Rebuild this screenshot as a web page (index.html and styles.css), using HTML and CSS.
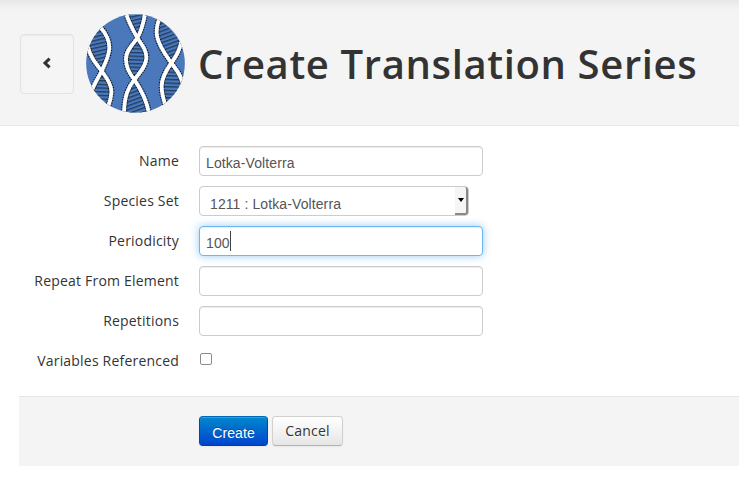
FILE: index.html
```html
<!DOCTYPE html>
<html lang="en">
<head>
<meta charset="utf-8">
<title>Create Translation Series</title>
<link rel="stylesheet" href="styles.css">
</head>
<body>
<header class="page-header">
  <a class="back" href="#" aria-label="Back"><svg width="10" height="12" viewBox="0 0 10 12"><path d="M7.6 1.6 3 6l4.6 4.4" fill="none" stroke="#333" stroke-width="3"/></svg></a>
  <svg class="logo" viewBox="20 16 297 297">
    <defs>
      <clipPath id="disc"><circle cx="168.500" cy="164.500" r="148"/></clipPath>
      <pattern id="up" width="20" height="11" patternUnits="userSpaceOnUse" patternTransform="rotate(-13)"><path d="M0 5H20" stroke="#142b45" stroke-width="3.200"/></pattern>
      <pattern id="flat" width="20" height="11" patternUnits="userSpaceOnUse" patternTransform="rotate(2)"><path d="M0 5H20" stroke="#142b45" stroke-width="3.200"/></pattern>
      <pattern id="down" width="20" height="11" patternUnits="userSpaceOnUse" patternTransform="rotate(-20)"><path d="M0 5H20" stroke="#142b45" stroke-width="3.200"/></pattern>
      <g id="strands" fill="none">
        <path d="M60 52C78 72 91 92 90 118C89 143 77 166 67 187C57 208 45 223 36 250"/>
        <path d="M25 112C32 145 50 165 67 187C85 212 98 232 96 253C95 272 90 282 85 298"/>
        <path d="M139 10C147 40 162 66 174 88C188 109 202 124 201 149C200 174 181 191 165 213C148 235 134 259 134 320"/>
        <path d="M198 10C193 41 186 67 174 88C158 110 141 125 140 149C139 174 149 193 165 213C182 238 203 272 210 320"/>
        <path d="M240 30C234 45 230 63 233 82C238 112 259 139 276 163C291 183 305 198 311 228"/>
        <path d="M306 98C302 123 290 144 276 163C261 184 247 206 247 232C247 253 251 269 259 291"/>
      </g>
    </defs>
    <g clip-path="url(#disc)">
      <rect width="340" height="340" fill="#4a78bb"/>
      <path fill="url(#up)" d="M60 52C78 72 91 92 90 118C89 143 77 166 67 187C50 165 32 145 25 112Z"/>
      <path fill="url(#flat)" d="M67 187C85 212 98 232 96 253L85 298L36 250C45 223 57 208 67 187Z"/>
      <path fill="url(#up)" d="M139 10C147 40 162 66 174 88C186 67 193 41 198 10Z"/>
      <path fill="url(#flat)" d="M174 88C188 109 202 124 201 149C200 174 181 191 165 213C149 193 139 174 140 149C141 125 158 110 174 88Z"/>
      <path fill="url(#down)" d="M165 213C148 235 134 259 134 320H210C203 272 182 238 165 213Z"/>
      <path fill="url(#down)" d="M240 30C234 45 230 63 233 82C238 112 259 139 276 163C290 144 302 123 306 98Z"/>
      <path fill="url(#flat)" d="M276 163C291 183 305 198 311 228L259 291C251 269 247 253 247 232C247 206 261 184 276 163Z"/>
      <use href="#strands" class="strand-edge"/>
      <use href="#strands" class="strand"/>
    </g>
  </svg>
  <h1>Create Translation Series</h1>
</header>
<main>
  <div class="row"><span class="label">Name</span><div class="field">Lotka-Volterra</div></div>
  <div class="row"><span class="label">Species Set</span><div class="field select"><span>1211 : Lotka-Volterra</span><i class="arrow"></i></div></div>
  <div class="row"><span class="label">Periodicity</span><div class="field focused">100<i class="caret"></i></div></div>
  <div class="row"><span class="label">Repeat From Element</span><div class="field"></div></div>
  <div class="row"><span class="label">Repetitions</span><div class="field"></div></div>
  <div class="row"><span class="label">Variables Referenced</span><span class="check"></span></div>
</main>
<footer class="actions"><button class="btn primary">Create</button><button class="btn">Cancel</button></footer>
</body>
</html>
```
FILE: styles.css
```css
* { box-sizing: border-box; }
body { margin: 0; background: #fff; color: #333; font: 14px/20px "Open Sans", sans-serif; overflow: hidden; }
.page-header { display: flex; align-items: flex-start; height: 126px; padding: 14px 0 0 20px; border-bottom: 1px solid #e8e8e8; background: linear-gradient(#e8e8e8, #f4f4f4 10px); }
.back { display: flex; align-items: center; justify-content: center; width: 54px; height: 60px; margin: 20px 12px 0 0; padding: 0 1px 3px 0; border: 1px solid #e2e2e2; border-radius: 4px; background: #f5f5f5; box-shadow: inset 0 1px 1px rgba(0,0,0,.04); }
.logo { width: 99px; height: 99px; flex: none; margin-right: 13px; }
.strand-edge { stroke: #111; stroke-width: 18; stroke-dasharray: 3.2 4; }
.strand { stroke: #fff; stroke-width: 11.5; }
h1 { margin: 20px 0 0; font-size: 40px; line-height: 60px; font-weight: 600; letter-spacing: .63px; white-space: nowrap; }
main { padding-top: 20px; height: 270px; }
.row { display: flex; height: 30px; margin-bottom: 10px; }
.label { width: 179px; margin-right: 20px; padding-top: 5px; text-align: right; letter-spacing: .2px; white-space: nowrap; }
.field { display: flex; align-items: center; width: 284px; height: 30px; padding: 3px 6px 0; border: 1px solid #ccc; border-radius: 4px; background: #fff; box-shadow: inset 0 1px 1px rgba(0,0,0,.075); color: #555; font-family: "Liberation Sans", sans-serif; letter-spacing: .1px; }
.focused { border-color: #6fb5ef; box-shadow: inset 0 1px 1px rgba(0,0,0,.075), 0 0 8px rgba(82,168,236,.6); }
.caret { width: 1px; height: 20px; margin: -3px 0 0 .5px; background: #444; }
.select { width: 270px; padding: 0 0 0 10px; justify-content: space-between; box-shadow: none; }
.select span { padding-top: 5px; }
.arrow { display: flex; align-items: center; justify-content: center; width: 13px; height: 28px; border-right: 2px solid #888; border-bottom: 2px solid #888; border-radius: 0 3px 3px 0; background: #f5f5f5; }
.arrow::before { content: ""; border: 3px solid transparent; border-top: 4px solid #000; border-bottom: 0; }
.check { width: 12px; height: 12px; margin: 7px 0 0 1px; border: 1px solid #8e8b88; border-radius: 2px; background: #fff; }
.actions { display: flex; gap: 4px; height: 70px; margin-left: 19px; padding: 19px 0 0 180px; border-top: 1px solid #e5e5e5; background: #f4f4f4; }
.btn { height: 30px; width: 71px; padding: 0; border: 1px solid #d0d0d0; border-bottom-color: #b3b3b3; border-radius: 4px; background: linear-gradient(#fff, #e6e6e6); box-shadow: inset 0 1px 0 rgba(255,255,255,.2), 0 1px 2px rgba(0,0,0,.05); color: #333; font: 14px/20px "Open Sans", sans-serif; letter-spacing: .2px; text-shadow: 0 1px 1px rgba(255,255,255,.75); }
.primary { width: 69px; padding-top: 4px; border-color: #0067b8 #0044bb #0038ad; background: linear-gradient(#0088cc, #0044cc); color: #fff; font-family: "Liberation Sans", sans-serif; letter-spacing: .1px; text-shadow: 0 -1px 0 rgba(0,0,0,.25); }
```
